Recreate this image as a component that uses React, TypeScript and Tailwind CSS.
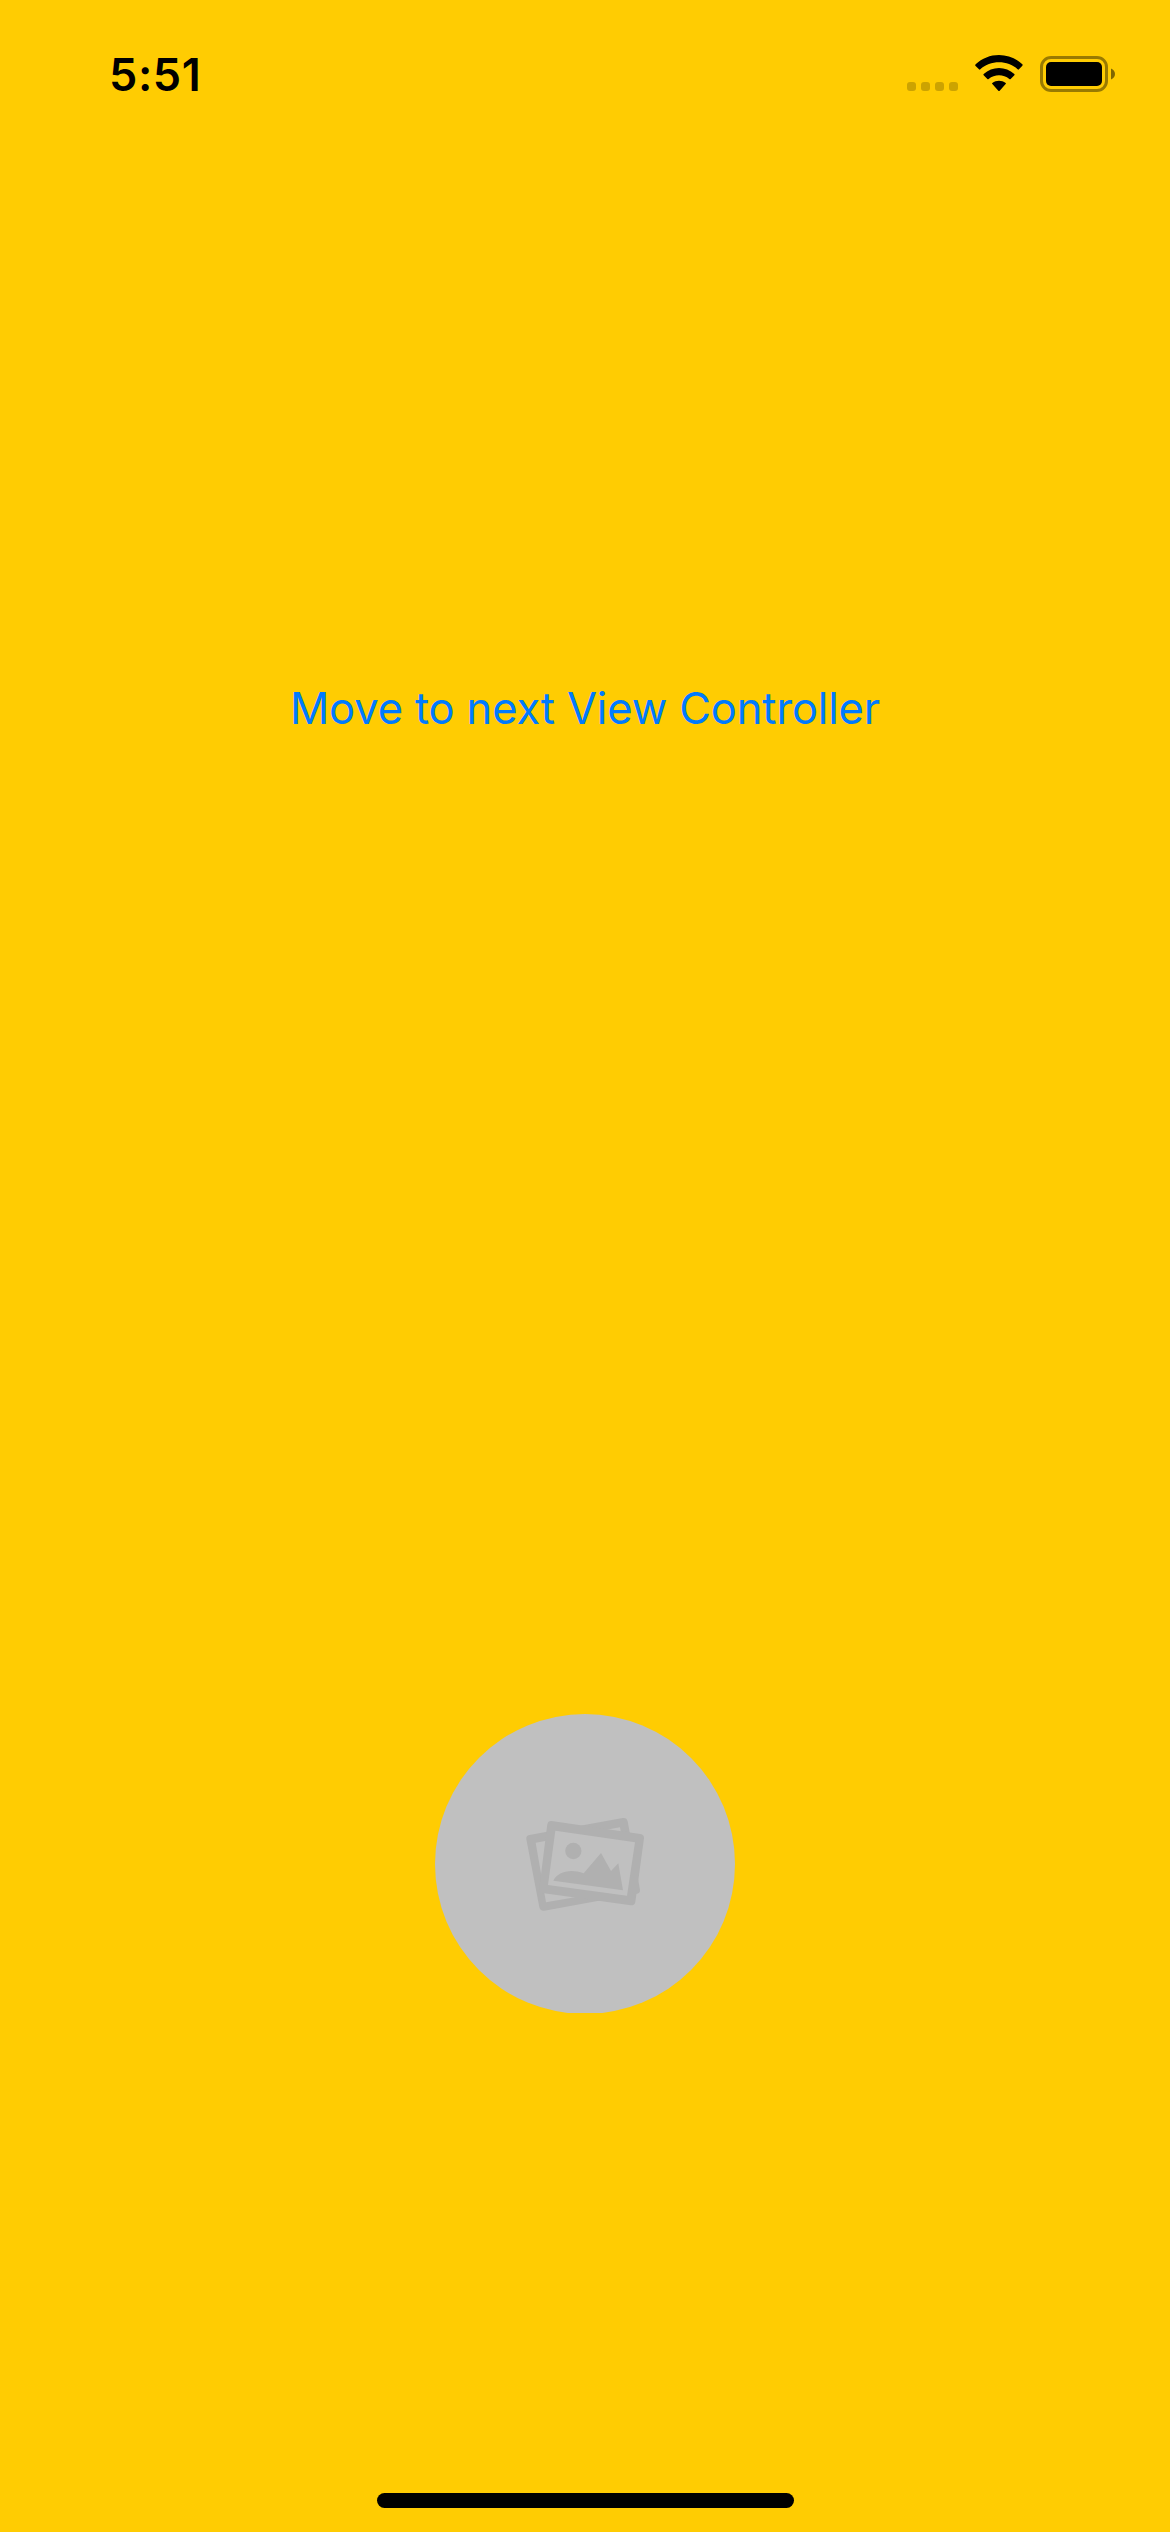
function StatusBar() {
  return (
    <header className="flex h-[150px] shrink-0 items-start justify-between pl-[109px] pr-[54px] pt-[47px]">
      <span className="mt-px text-[45px] font-semibold leading-[54px] tracking-[0.6px] text-black">5:51</span>
      <div className="flex h-[54px] items-start">
        <div className="mt-[35px] flex gap-[5px]">
          <span className="h-[9px] w-[9px] rounded-[3px] bg-black/20" />
          <span className="h-[9px] w-[9px] rounded-[3px] bg-black/20" />
          <span className="h-[9px] w-[9px] rounded-[3px] bg-black/20" />
          <span className="h-[9px] w-[9px] rounded-[3px] bg-black/20" />
        </div>
        <svg className="ml-[16px] mt-[7px] h-[38px] w-[50px]" viewBox="0 0 150 114" fill="black">
          <path d="M4 35Q3 33 5 31C24 13 49 3 75 3S126 13 145 31Q147 33 145 35L135 46Q133 48 131 46C116 32 96 25 75 25S34 32 19 46Q17 48 15 46Z" />
          <path d="M29 64Q27 62 29 60C42 48 58 42 75 42S108 48 121 60Q123 62 121 64L110 75Q108 77 106 75C97 68 86 64 75 64S53 68 44 75Q42 77 40 75Z" />
          <path d="M55 90Q53 88 55 87C61 82 68 80 75 80S89 82 95 87Q97 88 95 90L77 110Q75 112 73 110Z" />
        </svg>
        <svg className="ml-[15px] mt-[8px] h-[38px] w-[77px]" viewBox="0 0 77 38">
          <rect x="2.5" y="2.5" width="65" height="33" rx="9.5" fill="none" stroke="black" strokeOpacity=".4" strokeWidth="3" />
          <rect x="7" y="7" width="56" height="24" rx="5" fill="black" />
          <path d="M72 13.5C74.5 14.5 76 16.5 76 19S74.500 23.500 72 24.500Z" fill="black" fillOpacity=".5" />
        </svg>
      </div>
    </header>
  );
}

function PhotosIcon() {
  return (
    <svg className="mb-[2px] h-[115px] w-[140px]" viewBox="0 0 420 345" fill="#b0b0b0">
      <path
        fillRule="evenodd"
        d="M43 90L323 39Q335 37 338 49L375 254Q376 264 366 266L88 317Q76 319 73 307L34 103Q32 92 43 90ZM62 113L93 292L345 248L315 67Z"
      />
      <path d="M110 48L376 87Q388 89 387 100L361 291Q359 302 347 301L82 264Q71 262 73 250L97 58Q99 47 110 48Z" />
      <path d="M121 77L360 112L336 272L99 240Z" fill="#c0c0c0" />
      <circle cx="175" cy="138" r="24.500" />
      <path d="M115 227C128 201 165 190 206 205L258 144L288 198L310 175L324 256Z" />
    </svg>
  );
}

export default function App() {
  return (
    <main className="flex h-[2532px] w-[1170px] flex-col overflow-hidden bg-[#ffcc02] font-['Inter',sans-serif]">
      <StatusBar />
      <button className="mt-[531px] h-[54px] self-center whitespace-nowrap text-[43.5px] font-normal leading-[54px] tracking-[-0.15px] text-[#007aff]">
        Move to next View Controller
      </button>
      <div className="mt-[979px] flex h-[299px] w-[300px] shrink-0 items-center justify-center self-center overflow-hidden">
        <div className="flex h-[300px] w-[300px] shrink-0 items-center justify-center rounded-full bg-[#c0c0c0]">
          <PhotosIcon />
        </div>
      </div>
      <div className="mb-[24px] mt-auto h-[15px] w-[417px] shrink-0 self-center rounded-full bg-black" />
    </main>
  );
}
